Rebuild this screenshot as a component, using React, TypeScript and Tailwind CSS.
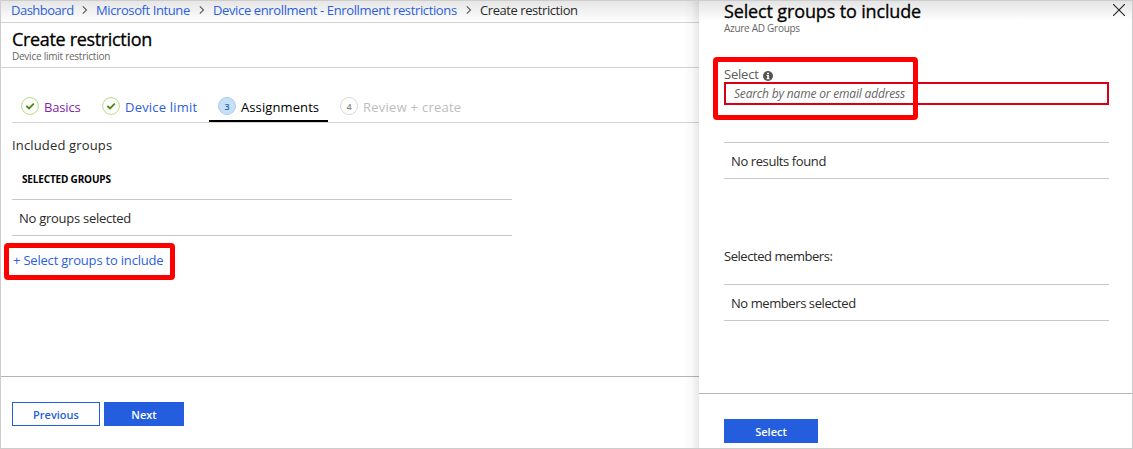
import type { ReactNode } from "react";

function Chevron() {
  return (
    <svg width="6" height="8" viewBox="0 0 6 8" fill="none" stroke="#555" strokeWidth="1.1">
      <path d="M0.8 0.4 L4.5 4 L0.8 7.6" />
    </svg>
  );
}

function StepDone() {
  return (
    <svg width="18" height="18" viewBox="0 0 18 18" fill="none">
      <circle cx="9" cy="9" r="8.4" stroke="#b5db86" />
      <path d="M5.3 8.9 L8 11.4 L12.8 6.6" stroke="#4a8a0c" strokeWidth="1.8" />
    </svg>
  );
}

function Row({ children }: { children: ReactNode }) {
  return (
    <div className="flex h-[37px] items-center border-y border-[#c8c8c8] pl-[7px]">{children}</div>
  );
}

export default function App() {
  return (
    <div className="relative flex h-[449px] w-[1133px] overflow-hidden border border-[#cdcdcd] bg-white font-['Open_Sans',sans-serif] text-[13px] leading-[18px] whitespace-nowrap text-[#2a2a2a]">
      <main className="flex w-[698px] shrink-0 flex-col">
        <nav className="flex h-[22px] shrink-0 items-center border-b border-[#d2d2d2] bg-linear-to-b from-[#e6e6e6] to-white pb-[4px] pl-[10px] text-[#2b5fdc]">
          <span className="w-[71px] tracking-[-0.5px]">Dashboard</span>
          <span className="w-[14px]"><Chevron /></span>
          <span className="w-[103px] tracking-[-0.4px]">Microsoft Intune</span>
          <span className="w-[14px]"><Chevron /></span>
          <span className="w-[253px] tracking-[-0.37px]">Device enrollment - Enrollment restrictions</span>
          <span className="w-[14px]"><Chevron /></span>
          <span className="tracking-[-0.43px] text-[#2a2a2a]">Create restriction</span>
        </nav>
        <header className="h-[45px] shrink-0 border-b border-[#d2d2d2] pt-[4px] pl-[11px]">
          <h1 className="text-[18px] leading-[24px] font-medium tracking-[-0.33px] text-black [-webkit-text-stroke:0.3px_black]">Create restriction</h1>
          <p className="-mt-px text-[10px] leading-[12px] tracking-[-0.25px] text-[#666]">Device limit restriction</p>
        </header>
        <div className="ml-[11px] flex h-[55px] shrink-0 border-b border-[#d2d2d2] pt-[29px]">
          <div className="flex w-[81px] pl-[9px] text-[#8426a8]">
            <span className="w-[23px]"><StepDone /></span>
            <span className="pt-px tracking-[-0.15px]">Basics</span>
          </div>
          <div className="flex w-[116px] pl-[9px] text-[#2b5fdc]">
            <span className="w-[23px]"><StepDone /></span>
            <span className="pt-px tracking-[0.2px]">Device limit</span>
          </div>
          <div className="flex w-[119px] border-b-2 border-black pl-[9px] text-black">
            <span className="mr-[5px] flex size-[18px] items-center justify-center rounded-full border border-[#abcdf0] bg-[#c7e0f4] pt-px text-[9px] font-semibold text-[#1769bd]">3</span>
            <span className="pt-px tracking-[0.1px]">Assignments</span>
          </div>
          <div className="flex pl-[12px] text-[#bdbdbd]">
            <span className="mr-[5px] flex size-[18px] items-center justify-center rounded-full border border-[#d8d8d8] pt-px text-[9px] font-semibold text-[#888]">4</span>
            <span className="pt-px tracking-[0.25px]">Review + create</span>
          </div>
        </div>
        <section className="flex h-[253px] shrink-0 flex-col pl-[11px]">
          <h2 className="mt-[13px] tracking-[0.15px]">Included groups</h2>
          <h3 className="mt-[17px] h-[28px] pl-[10px] text-[10px] leading-[16px] font-bold tracking-[-0.17px] text-black">SELECTED GROUPS</h3>
          <div className="w-[500px]">
            <Row><span className="tracking-[-0.27px]">No groups selected</span></Row>
          </div>
          <div className="mt-[7px] -ml-[8px] flex h-[37px] w-[171px] items-center rounded-[4px] border-[5px] border-[#fe0000] pb-[3px] pl-[4px] text-[#2b5fdc]">
            <span className="tracking-[-0.2px]">+ Select groups to include</span>
          </div>
        </section>
        <footer className="flex grow gap-1 border-t border-[#b5b5b5] pt-[25px] pl-[11px] text-[11px] font-semibold">
          <button className="h-6 w-[88px] border border-[#245edf] pt-px text-[#245edf]">Previous</button>
          <button className="h-6 w-[80px] bg-[#245edf] pt-px text-white">Next</button>
        </footer>
      </main>
      <div className="absolute top-0 left-[683px] h-[447px] w-[15px] bg-linear-to-r from-transparent via-black/[0.025] to-black/[0.09]" />
      <aside className="flex grow flex-col bg-white">
        <div className="flex h-[64px] shrink-0 justify-between bg-[linear-gradient(#e4e4e4,#fff_20px)] pr-[7px] pl-[25px]">
          <div className="-mt-[2px]">
            <h1 className="text-[18px] leading-[24px] font-medium tracking-[-0.14px] text-black [-webkit-text-stroke:0.3px_black]">Select groups to include</h1>
            <p className="-mt-px text-[10px] leading-[12px] tracking-[-0.28px] text-[#666]">Azure AD Groups</p>
          </div>
          <svg className="mt-[3px]" width="12" height="12" viewBox="0 0 12 12" stroke="#222" strokeWidth="1.1">
            <path d="M0 0 L12 12 M12 0 L0 12" />
          </svg>
        </div>
        <div className="flex h-[328px] flex-col pr-[23px] pl-[25px]">
          <div className="flex h-[17px] items-center gap-[4px] text-[#5c5c5c]">
            <span className="tracking-[-0.2px]">Select</span>
            <svg className="mt-[4px]" width="10" height="10" viewBox="0 0 10 10">
              <circle cx="5" cy="5" r="5" fill="#555" />
              <path d="M4 1.7h2v1.5H4zM3.6 4h2.3v3.3h.7v1H3.5v-1h.7V5h-.6z" fill="#fff" />
            </svg>
          </div>
          <div className="flex h-[23px] items-center border-2 border-[#d90016] pl-[8px] text-[12px] tracking-[-0.18px] text-[#666] italic">Search by name or email address</div>
          <div className="mt-[37px]"><Row><span className="tracking-[-0.4px]">No results found</span></Row></div>
          <p className="mt-[68px] mb-[19px] tracking-[-0.45px]">Selected members:</p>
          <Row><span className="tracking-[-0.42px]">No members selected</span></Row>
        </div>
        <footer className="grow border-t border-[#b5b5b5] pt-[25px] pl-[25px] text-[11px] font-semibold">
          <button className="block h-6 w-[94px] bg-[#245edf] pt-px text-white">Select</button>
        </footer>
      </aside>
      <div className="absolute top-[56px] left-[712px] h-[63px] w-[205px] rounded-[4px] border-[5px] border-[#fe0000]" />
    </div>
  );
}
